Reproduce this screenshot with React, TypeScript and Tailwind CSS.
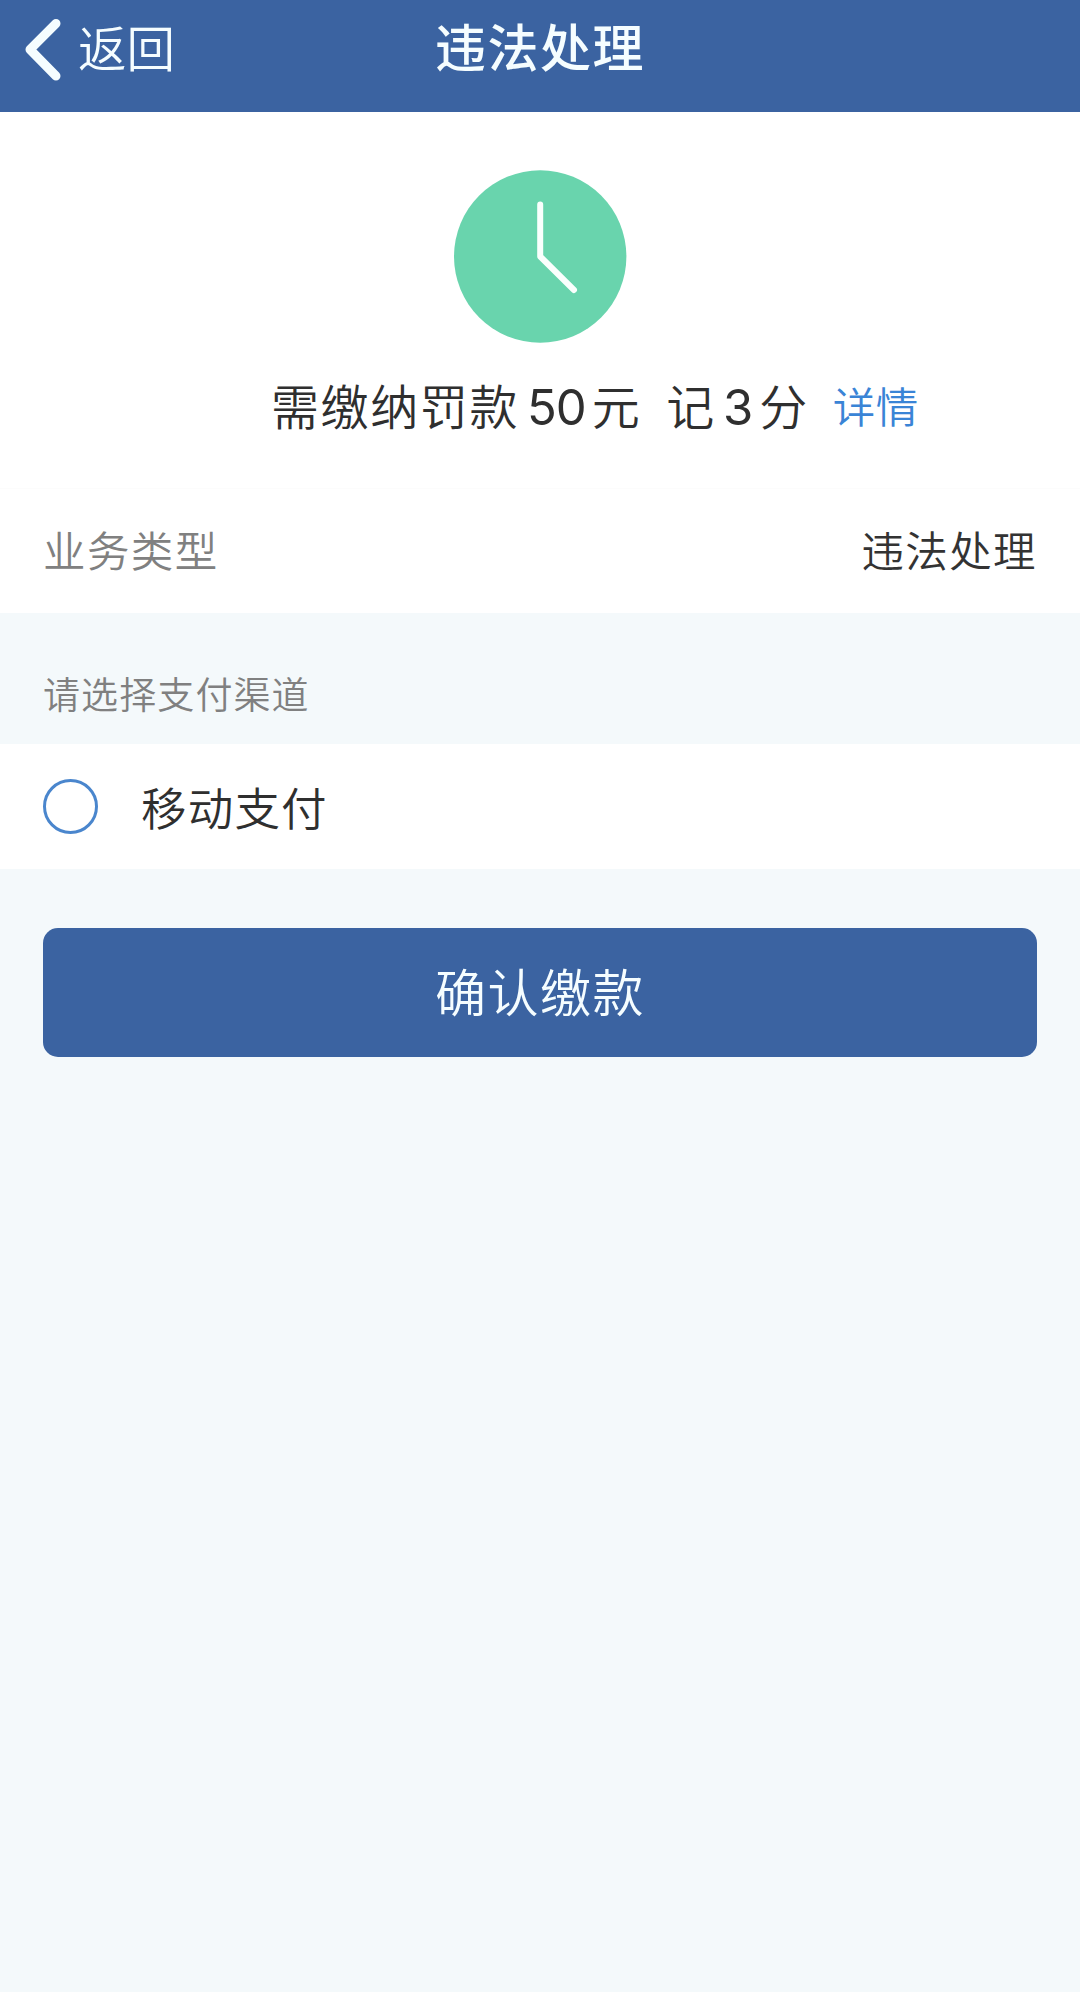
import React, { useState } from "react";

interface InfoRowProps {
  label: string;
  value: string;
}

interface PayChannelProps {
  name: string;
  checked: boolean;
  onSelect: () => void;
}

const Header: React.FC = () => {
  return (
    <header className="grid h-28 grid-cols-3 items-start bg-[#3b63a1] text-[#f5fdff]">
      <button className="flex items-start pl-[25px] pt-[12px]">
        <svg
          className="mt-[3px] h-[68px] w-[38px]"
          viewBox="0 0 38 68"
          fill="none"
          stroke="currentColor"
          strokeWidth="9"
          strokeLinecap="round"
          strokeLinejoin="round"
        >
          <path d="M31 8.5 L5 34.5 L31 61" />
        </svg>
        <span className="ml-[15px] text-[48.5px] leading-[68px]">返回</span>
      </button>
      <h1 className="whitespace-nowrap pt-[11px] text-center text-[51px] font-medium leading-[68px] tracking-[1.5px]">
        违法处理
      </h1>
    </header>
  );
};

const ClockIcon: React.FC = () => {
  return (
    <svg className="h-[173px] w-[173px]" viewBox="0 0 173 173" fill="none">
      <circle cx="86.2" cy="86.5" r="86.2" fill="#69d4ad" />
      <path
        d="M86.2 34.5 V86.5 L120 120"
        stroke="#fafffd"
        strokeWidth="6"
        strokeLinecap="round"
        strokeLinejoin="round"
      />
    </svg>
  );
};

const InfoRow: React.FC<InfoRowProps> = ({ label, value }) => {
  return (
    <div className="flex h-[125px] items-center justify-between border-t border-[#fcfcfc] bg-white px-[43px] pb-[5px] text-[42.5px] tracking-[1.4px]">
      <span className="text-[#808080]">{label}</span>
      <span className="text-[#333333]">{value}</span>
    </div>
  );
};

const PayChannel: React.FC<PayChannelProps> = ({ name, checked, onSelect }) => {
  return (
    <div
      className="flex h-[125px] cursor-pointer items-center bg-white px-[43px]"
      onClick={onSelect}
    >
      <span className="flex size-[55px] items-center justify-center rounded-full border-3 border-[#4a86cd]">
        {checked && <span className="size-7 rounded-full bg-[#4a86cd]" />}
      </span>
      <span className="ml-[43px] text-[45.5px] tracking-[1.2px] text-[#2f2f2f]">
        {name}
      </span>
    </div>
  );
};

export default function App() {
  const [checked, setChecked] = useState(false);

  return (
    <div className="min-h-screen bg-[#f4f9fb] font-['Noto_Sans_CJK_SC',sans-serif] font-[350]">
      <Header />

      <section className="flex h-[376px] flex-col items-center bg-white pt-[58px]">
        <ClockIcon />
        <div className="mt-[27px] flex items-baseline self-start whitespace-nowrap pl-[271px] text-[48px] leading-[68px] tracking-[1.6px] text-[#2f2f2f]">
          <span>需缴纳罚款</span>
          <span className="ml-[8px] font-['Inter',sans-serif] text-[49px] font-normal tracking-[-1px]">
            50
          </span>
          <span className="ml-[6px]">元</span>
          <span className="ml-[25px]">记</span>
          <span className="ml-[7px] font-['Inter',sans-serif] text-[49px] font-normal tracking-[0px]">
            3
          </span>
          <span className="ml-[6px]">分</span>
          <a className="mb-[3px] ml-[24px] cursor-pointer self-end text-[42.5px] leading-[68px] tracking-[0.5px] text-[#3a84d6]">
            详情
          </a>
        </div>
      </section>

      <InfoRow label="业务类型" value="违法处理" />

      <p className="h-[131px] px-[43px] pt-[53px] text-[37px] leading-[54px] tracking-[1.1px] text-[#808080]">
        请选择支付渠道
      </p>

      <PayChannel
        name="移动支付"
        checked={checked}
        onSelect={() => setChecked(!checked)}
      />

      <div className="px-[43px] pt-[59px]">
        <button className="h-[129px] w-full rounded-[15px] bg-[#3b63a1] pb-[4px] text-[51px] tracking-[1.5px] text-[#f5fdff]">
          确认缴款
        </button>
      </div>
    </div>
  );
}
